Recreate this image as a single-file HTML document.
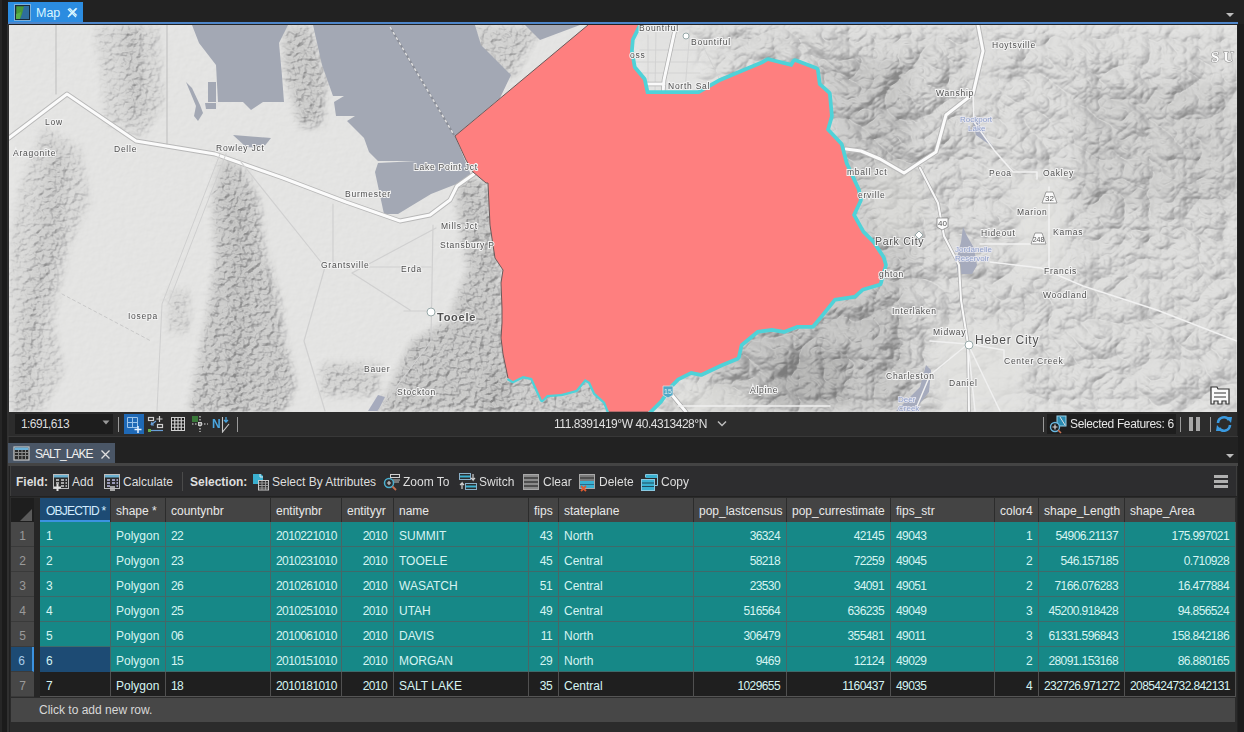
<!DOCTYPE html>
<html><head><meta charset="utf-8">
<style>
*{margin:0;padding:0;box-sizing:border-box}
html,body{width:1244px;height:732px;overflow:hidden;background:#222222;font-family:"Liberation Sans",sans-serif;font-size:12px;color:#e6e6e6}
.a{position:absolute}
#lstrip{left:0;top:0;width:8px;height:732px;background:#1b1b1b}
#maptab{left:8px;top:2px;width:75px;height:21px;background:#2b8ce0}
#mapline{left:8px;top:22px;width:1230px;height:2px;background:#4f86c9}
#map{left:9px;top:25px;width:1228px;height:387px;overflow:hidden;background:#e3e3e1}
#status{left:9px;top:412px;width:1228px;height:24px;background:#2c2c2c}
#tabbar2{left:8px;top:436px;width:1230px;height:1px;background:#383838}
#tab2{left:8px;top:443px;width:107px;height:21px;background:#4a5666}
#tabline2{left:8px;top:463px;width:1230px;height:3px;background:#444}
#tool{left:10px;top:466px;width:1227px;height:30px;background:#2d2d2f;border-left:1px solid #3d3d3d;border-right:1px solid #3d3d3d}
#tbl{left:10px;top:497px;width:1227px;height:235px;background:#2b2b2b}
.hc{position:absolute;top:498px;height:24px;background:#444;padding-left:6px;line-height:26px;color:#e8e8e8;white-space:nowrap;overflow:hidden}
.hc.sel{background:#1d4b74;border-bottom:2px solid #3b92e0;color:#d2ecff}
.row{position:absolute;left:40px;width:1195px;height:25px}
.row.t{background:#168887;border-bottom:1px solid #3f6a6a}
.row.k{background:#1f1f1f;border-bottom:1px solid #555}
.rh{position:absolute;left:11px;width:23px;height:25px;background:#474747;color:#9a9a9a;text-align:center;line-height:28px;border-bottom:1px solid #3a3a3a}
.rh.s6{background:#1d4b74;color:#a9cbe8;border-right:2px solid #3b92e0}
.c{position:absolute;height:25px;line-height:28px;padding:0 6px;white-space:nowrap;overflow:hidden;color:#d6f4f2}
.c.r{text-align:right}
.c.n{letter-spacing:-0.6px}
.c6{background:#1d4b74}
.row.k+.rh+.c{}
.vl{position:absolute;top:522px;width:1px;height:150px;background:#4a6666}
.vk{position:absolute;top:672px;width:1px;height:25px;background:#505050}
.vh{position:absolute;top:498px;width:1px;height:24px;background:#2c2c2c}
#corner{left:11px;top:498px;width:23px;height:24px;background:#1e1e1e}
#hsep{left:34px;top:498px;width:6px;height:199px;background:#262626}
#addrow{left:11px;top:698px;width:1224px;height:24px;background:#474747;color:#d8d8d8;line-height:25px;padding-left:28px}
</style></head><body>
<div class="a" id="lstrip"></div>
<div class="a" style="left:1238px;top:24px;width:6px;height:708px;background:#1c1c1c"></div>
<div class="a" style="left:0;top:0;width:2px;height:732px;background:#262626"></div>
<div class="a" style="left:7px;top:24px;width:2px;height:708px;background:#303030"></div>
<div class="a" id="maptab"></div>
<div class="a" style="left:15px;top:5px;width:14px;height:15px;background:#3f8a4a;border:1px solid #1a3a5a"></div>
<div class="a" style="left:36px;top:6px;font-size:12.5px;color:#d9f6ff">Map</div>
<div class="a" style="left:67px;top:4px;font-size:14px;color:#d9f6ff">&#x2715;</div>
<div class="a" id="mapline"></div>
<div class="a" id="map"><svg width="1228" height="387" viewBox="9 25 1228 387" style="display:block">
<defs>
<filter id="hsw" filterUnits="userSpaceOnUse" x="9" y="24" width="611" height="388" color-interpolation-filters="sRGB">
  <feGaussianBlur in="SourceAlpha" stdDeviation="4.5" result="m"/>
  <feTurbulence type="fractalNoise" baseFrequency="0.17 0.2" numOctaves="3" seed="11" result="n"/>
  <feComposite in="n" in2="m" operator="arithmetic" k1="1" k2="0" k3="0" k4="0" result="h"/>
  <feDiffuseLighting in="h" surfaceScale="9" diffuseConstant="1" lighting-color="#ffffff" result="l">
    <feDistantLight azimuth="225" elevation="62"/>
  </feDiffuseLighting>
  <feComponentTransfer in="l" result="t">
    <feFuncR type="table" tableValues="0.62 0.74 0.82 0.885 0.92"/>
    <feFuncG type="table" tableValues="0.62 0.74 0.82 0.885 0.92"/>
    <feFuncB type="table" tableValues="0.62 0.74 0.82 0.88 0.915"/>
  </feComponentTransfer>
  <feColorMatrix in="m" type="matrix" values="0 0 0 -0.17 1  0 0 0 -0.17 1  0 0 0 -0.17 1  0 0 0 0 1" result="mc"/>
  <feComposite in="t" in2="mc" operator="arithmetic" k1="1" k2="0" k3="0" k4="0"/>
</filter>
<filter id="hse" filterUnits="userSpaceOnUse" x="620" y="24" width="617" height="388" color-interpolation-filters="sRGB">
  <feGaussianBlur in="SourceAlpha" stdDeviation="10" result="m"/>
  <feTurbulence type="turbulence" baseFrequency="0.02 0.025" numOctaves="4" seed="5" result="n"/>
  <feComposite in="n" in2="m" operator="arithmetic" k1="1" k2="0" k3="0" k4="0" result="h"/>
  <feDiffuseLighting in="h" surfaceScale="20" diffuseConstant="1" lighting-color="#ffffff" result="l">
    <feDistantLight azimuth="225" elevation="62"/>
  </feDiffuseLighting>
  <feComponentTransfer in="l" result="t">
    <feFuncR type="table" tableValues="0.62 0.74 0.82 0.885 0.93"/>
    <feFuncG type="table" tableValues="0.62 0.74 0.82 0.885 0.93"/>
    <feFuncB type="table" tableValues="0.62 0.74 0.82 0.88 0.925"/>
  </feComponentTransfer>
  <feColorMatrix in="m" type="matrix" values="0 0 0 -0.1 1  0 0 0 -0.1 1  0 0 0 -0.1 1  0 0 0 0 1" result="mc"/>
  <feComposite in="t" in2="mc" operator="arithmetic" k1="1" k2="0" k3="0" k4="0"/>
</filter>
<filter id="bl4"><feGaussianBlur stdDeviation="6"/></filter>
</defs>
<g filter="url(#hsw)">
  <rect x="9" y="24" width="611" height="388" fill="#000" fill-opacity="0.05"/>
  <!-- Lakeside -->
  <path d="M93 25 L157 25 L162 104 L141 136 L104 120 L101 78 Z" fill="#000" fill-opacity="0.35"/>
  <path d="M118 25 L140 25 L145 110 L128 120 Z" fill="#000" fill-opacity="0.4"/>
  <!-- Cedar -->
  <path d="M41 125 L78 146 L88 199 L67 246 L51 320 L62 368 L41 411 L9 411 L9 236 L20 183 Z" fill="#000" fill-opacity="0.35"/>
  <path d="M50 140 L68 160 L62 240 L40 320 L30 411 L15 411 L25 300 L40 200 Z" fill="#000" fill-opacity="0.35"/>
  <!-- Stansbury -->
  <path d="M220 157 L241 167 L257 199 L262 246 L278 299 L283 341 L294 383 L283 411 L188 411 L199 352 L209 299 L215 257 L212 199 Z" fill="#000" fill-opacity="0.65"/>
  <path d="M228 190 L244 195 L250 300 L240 411 L226 411 L232 300 Z" fill="#000" fill-opacity="0.45"/>
  <path d="M167 289 L188 289 L188 331 L167 331 Z" fill="#000" fill-opacity="0.35"/>
  <!-- island -->
  <path d="M283 25 L309 25 L325 78 L320 125 L299 125 L283 67 Z" fill="#000" fill-opacity="0.65"/>
  <path d="M473 25 L540 25 L510 78 L480 60 Z" fill="#000" fill-opacity="0.5"/>
  <!-- Oquirrh -->
  <path d="M457 178 L483 178 L494 225 L505 341 L510 411 L378 411 L410 341 L447 320 L468 267 L457 215 Z" fill="#000" fill-opacity="0.7"/>
  <path d="M320 362 L378 362 L378 394 L320 394 Z" fill="#000" fill-opacity="0.45"/>
  <path d="M483 368 L620 368 L620 411 L483 411 Z" fill="#000" fill-opacity="0.6"/>
</g>
<g filter="url(#hse)">
  <rect x="620" y="24" width="617" height="388" fill="#000" fill-opacity="0.05"/>
  <path d="M600 25 L1237 25 L1237 411 L600 411 L760 330 L880 280 L860 150 L820 60 Z" fill="#000" fill-opacity="0.55"/>
  <path d="M815 60 L915 60 L920 280 L860 300 Z" fill="#000" fill-opacity="0.6"/>
  <path d="M735 285 L920 270 L920 411 L690 411 Z" fill="#000" fill-opacity="0.7"/>
  <path d="M765 340 L850 340 L850 411 L765 411 Z" fill="#000" fill-opacity="0.6"/>
  <path d="M740 300 L900 290 L910 360 L740 350 Z" fill="#000" fill-opacity="0.4"/>
  <path d="M830 25 L975 25 L975 150 L830 150 Z" fill="#000" fill-opacity="0.3"/>
  <path d="M700 25 L830 25 L830 75 L700 90 Z" fill="#000" fill-opacity="0.5"/>
  <path d="M1075 80 L1237 80 L1237 240 L1075 240 Z" fill="#000" fill-opacity="0.3"/>
</g>
<!-- extra shade -->
<g fill="#000" filter="url(#bl4)">
  <path d="M740 300 L900 290 L910 411 L700 411 Z" opacity="0.06"/>
  <path d="M770 350 L845 350 L845 405 L770 405 Z" opacity="0.08"/>
  <path d="M815 60 L910 60 L915 280 L870 290 Z" opacity="0.05"/>
  <path d="M1080 90 L1237 80 L1237 200 L1080 210 Z" opacity="0.04"/>
</g>
<!-- valleys / flats (lighten) -->
<g fill="#e2e2e0" filter="url(#bl4)">
  <path d="M636 25 L690 25 L700 94 L646 94 Z" opacity="0.85"/>
  <path d="M930 320 L1030 330 L1025 411 L935 411 Z" opacity="0.8"/>
  <path d="M1012 175 L1068 175 L1068 275 L1015 275 Z" opacity="0.8"/>
  <ellipse cx="895" cy="200" rx="28" ry="38" opacity="0.6"/>
  <ellipse cx="983" cy="65" rx="15" ry="40" opacity="0.5"/>
  <ellipse cx="712" cy="400" rx="45" ry="16" opacity="0.6"/>
</g>
<!-- lakes -->
<g fill="#a3a8b4">
  <path d="M192 25 L199 43 L216 65 L218 102 L243 102 L251 110 L263 102 L284 102 L282 76 L279 43 L288 25 Z"/>
  <path d="M186 82 L192 88 L200 105 L203 113 L198 121 L194 116 L196 106 Z"/>
  <path d="M208 82 L216 82 L216 102 L208 102 Z"/>
  <path d="M205 103 L216 103 L216 109 L206 109 Z"/>
  <path d="M233 135 L271 138 L263 148 L246 147 Z"/>
  <path d="M313 25 L322 65 L333 96 L344 96 L334 102 L336 116 L355 116 L347 121 L364 138 L369 152 L378 161 L417 161 L378 163 L375 172 L384 214 L398 214 L431 194 L459 183 L471 175 L455 136 L500 98 L511 75 L501 65 L481 45 L475 25 Z"/>
  <path d="M525 25 L580 25 L540 40 Z"/>
</g>
<g fill="#a6abbd">
  <path d="M972 120 L976 135 L994 148 L985 136 L978 122 Z"/>
  <path d="M963 227 L967 236 L974 248 L977 265 L972 274 L958 274 L956 261 L961 242 Z"/>
  <path d="M926 365 L931 370 L929 392 L920 403 L915 411 L896 411 L907 400 L920 387 Z"/>
  <path d="M368 411 L378 395 L385 397 L378 411 Z"/>
</g>
<!-- railroad causeway -->
<line x1="390" y1="27" x2="454" y2="135" stroke="#8a8e98" stroke-width="2"/><line x1="390" y1="27" x2="454" y2="135" stroke="#e0e0e0" stroke-width="1.5" stroke-dasharray="3 3"/>
<!-- roads -->
<g fill="none" stroke-linejoin="round" stroke-linecap="round">
  <path d="M9 138 L67 94 L136 141 L215 154 L283 178 L346 202 L400 221 L430 215 L450 200 L457 186 L474 174 L480 168" stroke="#b8b8b8" stroke-width="5"/>
  <path d="M9 138 L67 94 L136 141 L215 154 L283 178 L346 202 L400 221 L430 215 L450 200 L457 186 L474 174 L480 168" stroke="#fbfbfb" stroke-width="3"/>
  <path d="M846 149 L861 151 L880 159 L904 173 L919 163 L936 152 L946 115 L973 94 L983 51 L978 25" stroke="#b8b8b8" stroke-width="5"/>
  <path d="M846 149 L861 151 L880 159 L904 173 L919 163 L936 152 L946 115 L973 94 L983 51 L978 25" stroke="#fbfbfb" stroke-width="3"/>
  <path d="M920 168 L938 203 L944 236 L959 265 L961 300 L968 344 L969 411" stroke="#b0b0b0" stroke-width="3.5"/><path d="M920 168 L938 203 L944 236 L959 265 L961 300 L968 344 L969 411" stroke="#f8f8f8" stroke-width="2"/>
  <path d="M640 50 L700 50 M636 62 L705 62 M640 73 L700 73 M648 35 L648 94 M656 30 L655 94 M690 30 L685 90 M700 40 L720 80" stroke="#cfcfcf" stroke-width="0.8"/>
  <path d="M676 25 L664 80 L663 94 M646 84 L664 84" stroke="#b0b0b0" stroke-width="4.5"/><path d="M676 25 L664 80 L663 94 M646 84 L664 84" stroke="#fafafa" stroke-width="3"/>
  <path d="M973 94 L974 122 L994 150 L1013 172 L1037 172 L1037 179 M1049 187 L1049 268 M980 244 L1033 244 M990 262 L1041 268 L1083 286 L1157 310 L1237 341" stroke="#f2f2f2" stroke-width="1.5"/>
  <path d="M968 344 L930 375 L915 411 M968 344 L1000 411 M930 341 L968 344 L1004 350 L1004 360 M968 344 L975 411" stroke="#f0f0f0" stroke-width="1.5"/>
  <path d="M220 154 L162 304 L157 411 M226 154 L168 304" stroke="#cfcfcf" stroke-width="1"/>
  <path d="M167 25 L167 144 M56 25 L56 94" stroke="#bdbdbd" stroke-width="1"/>
  <path d="M62 294 L151 341" stroke="#c8c8c8" stroke-width="1" stroke-dasharray="3 3"/>
  <path d="M241 162 L325 267 L431 267 M333 204 L333 267 M352 273 L410 310 M325 267 L304 341 L325 411 M436 228 L352 273 M433 225 L431 341 M404 311 L431 311 M431 341 L378 411" stroke="#d0d0d0" stroke-width="1.2"/>
  <path d="M672 395 L686 412" stroke="#a8a8a8" stroke-width="4.5"/><path d="M672 395 L686 412" stroke="#fafafa" stroke-width="3"/><path d="M678 406 L830 406" stroke="#f0f0f0" stroke-width="1.5"/>
</g>
<!-- polygon -->
<path d="M638 25 L631 39 L630 51 L633 68 L643 80 L646 94 L699 94 L720 82 L763 64 L768 61 L792 67 L795 62 L816 70 L818 85 L828 94 L830 116 L826 130 L840 145 L845 164 L857 190 L859 200 L852 215 L862 233 L872 243 L882 258 L884 265 L879 283 L862 288 L854 295 L834 298 L822 313 L812 325 L797 325 L784 330 L772 328 L757 330 L740 344 L737 357 L720 364 L701 373 L691 371 L677 378 L670 385 L660 400 L648 412" fill="none" stroke="#4fd2d8" stroke-width="7.5" stroke-linejoin="round"/>
<path d="M609 412 L605 402 L595 393 L590 382 L585 379 L576 390 L561 394 L547 395 L542 400 L532 378 L523 376 L513 381 L508 378" fill="none" stroke="#4fd2d8" stroke-width="4.5" stroke-linejoin="round"/>
<path d="M588 25 L638 25 L631 39 L630 51 L633 68 L643 80 L646 94 L699 94 L720 82 L763 64 L768 61 L792 67 L795 62 L816 70 L818 85 L828 94 L830 116 L826 130 L840 145 L845 164 L857 190 L859 200 L852 215 L862 233 L872 243 L882 258 L884 265 L879 283 L862 288 L854 295 L834 298 L822 313 L812 325 L797 325 L784 330 L772 328 L757 330 L740 344 L737 357 L720 364 L701 373 L691 371 L677 378 L670 385 L660 400 L648 412 L609 412 L605 402 L595 393 L590 382 L585 379 L576 390 L561 394 L547 395 L542 400 L532 378 L523 376 L513 381 L508 378 L503 354 L501 338 L502 323 L502 308 L501 283 L503 270 L495 258 L493 245 L490 225 L488 183 L486 183 L473 172 L466 160 L455 136 Z" fill="#fe7f7f"/>
<path d="M648 412 L609 412 M508 378 L503 354 L501 338 L502 323 L502 308 L501 283 L503 270 L495 258 L493 245 L490 225 L488 183 L486 183 L473 172 L466 160 L455 136 L588 25" fill="none" stroke="#6a5a5a" stroke-width="1"/>
<!-- shields -->
<g font-family="Liberation Sans" font-size="8" fill="#555" text-anchor="middle">
  <path d="M937 218 L948 218 L948 227 L942 230 L937 227 Z" fill="#fafafa" stroke="#888" stroke-width="0.8"/>
  <text x="942.5" y="226">40</text>
  <path d="M1042 203 L1046 192 L1053 192 L1057 203 Z" fill="#fafafa" stroke="#888" stroke-width="0.8"/>
  <text x="1049.5" y="201">32</text>
  <path d="M1031 244 L1035 233 L1042 233 L1046 244 Z" fill="#fafafa" stroke="#888" stroke-width="0.8"/>
  <text x="1038.5" y="242" font-size="7">248</text>
  <path d="M663 386 L673 386 L673 395 L668 398 L663 395 Z" fill="#4fa9c8" stroke="#ddd" stroke-width="0.8"/>
  <text x="668" y="394" fill="#eee" font-size="7">15</text>
</g>
<!-- labels -->
<g font-family="Liberation Sans" font-size="8.5" fill="#505050" letter-spacing="0.75" stroke="#f2f2f2" stroke-width="2" paint-order="stroke">
  <text x="45" y="125">Low</text>
  <text x="13" y="156">Aragonite</text>
  <text x="114" y="152">Delle</text>
  <text x="216" y="151">Rowley Jct</text>
  <text x="345" y="197">Burmester</text>
  <text x="414" y="170">Lake Point Jct</text>
  <text x="441" y="229">Mills Jct</text>
  <text x="440" y="248">Stansbury P</text>
  <text x="321" y="268">Grantsville</text>
  <text x="401" y="272">Erda</text>
  <text x="128" y="319">Iosepa</text>
  <text x="364" y="372">Bauer</text>
  <text x="397" y="395">Stockton</text>
  <text x="639" y="31">Bountiful</text>
  <text x="691" y="45">Bountiful</text>
  <text x="630" y="58">oss</text>
  <text x="668" y="89">North Sal</text>
  <text x="992" y="48">Hoytsville</text>
  <text x="936" y="96">Wanship</text>
  <text x="989" y="176">Peoa</text>
  <text x="1043" y="176">Oakley</text>
  <text x="1017" y="215">Marion</text>
  <text x="1053" y="235">Kamas</text>
  <text x="981" y="236">Hideout</text>
  <text x="1044" y="274">Francis</text>
  <text x="1043" y="298">Woodland</text>
  <text x="847" y="175">mball Jct</text>
  <text x="858" y="198">erville</text>
  <text x="879" y="277">ghton</text>
  <text x="892" y="314">Interlaken</text>
  <text x="933" y="335">Midway</text>
  <text x="1004" y="364">Center Creek</text>
  <text x="886" y="379">Charleston</text>
  <text x="949" y="386">Daniel</text>
  <text x="750" y="393">Alpine</text>
  <text x="875" y="245" font-size="10.5">Park City</text>
  <text x="975" y="344" font-size="12">Heber City</text>
  <text x="437" y="321" font-size="11" font-weight="bold">Tooele</text>
</g>
<g font-family="Liberation Sans" font-size="8" fill="#8f9fc8" stroke="#e8e8f0" stroke-width="1.5" paint-order="stroke">
  <text x="960" y="122">Rockport</text><text x="968" y="131">Lake</text>
  <text x="955" y="252">Jordanelle</text><text x="955" y="261">Reservoir</text>
  <text x="898" y="402">Deer</text><text x="898" y="411">Creek</text>
</g>
<g fill="#fff" stroke="#9aa" stroke-width="1">
  <circle cx="431" cy="312" r="4"/><circle cx="969" cy="345" r="4"/><circle cx="686" cy="36" r="3"/><path d="M919 231 L923 235 L919 239 L915 235 Z"/>
</g>
<text x="1211" y="62" font-family="Liberation Serif" font-size="15" font-weight="bold" fill="#fbfbfb" stroke="#8a8a8a" stroke-width="0.9" paint-order="stroke" letter-spacing="4">SU</text>
<!-- overview button -->
<path d="M1211 387 L1217 387 L1218 389 L1229 389 L1229 404 L1226 404 L1226 401 L1222 401 L1222 404 L1218 404 L1218 401 L1214 401 L1214 404 L1211 404 Z" fill="#fafafa" stroke="#333" stroke-width="1.2"/>
<path d="M1214 393 L1226 393 M1214 397 L1226 397" stroke="#333" stroke-width="1.2"/>
</svg>
</div>
<div class="a" id="status"></div>
<div class="a" style="left:15px;top:414px;width:98px;height:20px;background:#1d1d1d"></div>
<div class="a" style="left:21px;top:417px;color:#dcdcdc;font-size:12px;letter-spacing:-0.6px">1:691,613</div>
<div class="a" id="tabbar2"></div>
<div class="a" id="tab2"></div>
<div class="a" style="left:35px;top:447px;color:#f0f0f0;letter-spacing:-1px">SALT_LAKE</div>
<div class="a" id="tabline2"></div>
<div class="a" id="tool"></div>
<div class="a" style="left:16px;top:475px;font-weight:bold;color:#dedede">Field:</div>
<div class="a" style="left:72px;top:475px;color:#dedede">Add</div>
<div class="a" style="left:123px;top:475px;color:#dedede">Calculate</div>
<div class="a" style="left:190px;top:475px;font-weight:bold;color:#dedede">Selection:</div>
<div class="a" style="left:272px;top:475px;color:#dedede">Select By Attributes</div>
<div class="a" id="tbl"></div>
<div class="a" id="corner"></div>
<div class="a" id="hsep"></div>
<div class="hc sel" style="left:40px;width:70px;letter-spacing:-0.8px">OBJECTID *</div>
<div class="hc" style="left:110px;width:55px">shape *</div>
<div class="hc" style="left:165px;width:105px">countynbr</div>
<div class="hc" style="left:270px;width:71px">entitynbr</div>
<div class="hc" style="left:341px;width:52px">entityyr</div>
<div class="hc" style="left:393px;width:135px">name</div>
<div class="hc" style="left:528px;width:30px">fips</div>
<div class="hc" style="left:558px;width:135px">stateplane</div>
<div class="hc" style="left:693px;width:93px">pop_lastcensus</div>
<div class="hc" style="left:786px;width:104px">pop_currestimate</div>
<div class="hc" style="left:890px;width:104px">fips_str</div>
<div class="hc" style="left:994px;width:44px">color4</div>
<div class="hc" style="left:1038px;width:86px">shape_Length</div>
<div class="hc" style="left:1124px;width:111px">shape_Area</div>
<div class="row t" style="top:522px"></div>
<div class="rh" style="top:522px">1</div>
<div class="c n" style="top:522px;left:40px;width:70px">1</div>
<div class="c" style="top:522px;left:110px;width:55px">Polygon</div>
<div class="c n" style="top:522px;left:165px;width:105px">22</div>
<div class="c n" style="top:522px;left:270px;width:71px">2010221010</div>
<div class="c r n" style="top:522px;left:341px;width:52px">2010</div>
<div class="c" style="top:522px;left:393px;width:135px">SUMMIT</div>
<div class="c r n" style="top:522px;left:528px;width:30px">43</div>
<div class="c" style="top:522px;left:558px;width:135px">North</div>
<div class="c r n" style="top:522px;left:693px;width:93px">36324</div>
<div class="c r n" style="top:522px;left:786px;width:104px">42145</div>
<div class="c n" style="top:522px;left:890px;width:104px">49043</div>
<div class="c r n" style="top:522px;left:994px;width:44px">1</div>
<div class="c r n" style="top:522px;left:1038px;width:86px">54906.21137</div>
<div class="c r n" style="top:522px;left:1124px;width:111px">175.997021</div>
<div class="row t" style="top:547px"></div>
<div class="rh" style="top:547px">2</div>
<div class="c n" style="top:547px;left:40px;width:70px">2</div>
<div class="c" style="top:547px;left:110px;width:55px">Polygon</div>
<div class="c n" style="top:547px;left:165px;width:105px">23</div>
<div class="c n" style="top:547px;left:270px;width:71px">2010231010</div>
<div class="c r n" style="top:547px;left:341px;width:52px">2010</div>
<div class="c" style="top:547px;left:393px;width:135px">TOOELE</div>
<div class="c r n" style="top:547px;left:528px;width:30px">45</div>
<div class="c" style="top:547px;left:558px;width:135px">Central</div>
<div class="c r n" style="top:547px;left:693px;width:93px">58218</div>
<div class="c r n" style="top:547px;left:786px;width:104px">72259</div>
<div class="c n" style="top:547px;left:890px;width:104px">49045</div>
<div class="c r n" style="top:547px;left:994px;width:44px">2</div>
<div class="c r n" style="top:547px;left:1038px;width:86px">546.157185</div>
<div class="c r n" style="top:547px;left:1124px;width:111px">0.710928</div>
<div class="row t" style="top:572px"></div>
<div class="rh" style="top:572px">3</div>
<div class="c n" style="top:572px;left:40px;width:70px">3</div>
<div class="c" style="top:572px;left:110px;width:55px">Polygon</div>
<div class="c n" style="top:572px;left:165px;width:105px">26</div>
<div class="c n" style="top:572px;left:270px;width:71px">2010261010</div>
<div class="c r n" style="top:572px;left:341px;width:52px">2010</div>
<div class="c" style="top:572px;left:393px;width:135px">WASATCH</div>
<div class="c r n" style="top:572px;left:528px;width:30px">51</div>
<div class="c" style="top:572px;left:558px;width:135px">Central</div>
<div class="c r n" style="top:572px;left:693px;width:93px">23530</div>
<div class="c r n" style="top:572px;left:786px;width:104px">34091</div>
<div class="c n" style="top:572px;left:890px;width:104px">49051</div>
<div class="c r n" style="top:572px;left:994px;width:44px">2</div>
<div class="c r n" style="top:572px;left:1038px;width:86px">7166.076283</div>
<div class="c r n" style="top:572px;left:1124px;width:111px">16.477884</div>
<div class="row t" style="top:597px"></div>
<div class="rh" style="top:597px">4</div>
<div class="c n" style="top:597px;left:40px;width:70px">4</div>
<div class="c" style="top:597px;left:110px;width:55px">Polygon</div>
<div class="c n" style="top:597px;left:165px;width:105px">25</div>
<div class="c n" style="top:597px;left:270px;width:71px">2010251010</div>
<div class="c r n" style="top:597px;left:341px;width:52px">2010</div>
<div class="c" style="top:597px;left:393px;width:135px">UTAH</div>
<div class="c r n" style="top:597px;left:528px;width:30px">49</div>
<div class="c" style="top:597px;left:558px;width:135px">Central</div>
<div class="c r n" style="top:597px;left:693px;width:93px">516564</div>
<div class="c r n" style="top:597px;left:786px;width:104px">636235</div>
<div class="c n" style="top:597px;left:890px;width:104px">49049</div>
<div class="c r n" style="top:597px;left:994px;width:44px">3</div>
<div class="c r n" style="top:597px;left:1038px;width:86px">45200.918428</div>
<div class="c r n" style="top:597px;left:1124px;width:111px">94.856524</div>
<div class="row t" style="top:622px"></div>
<div class="rh" style="top:622px">5</div>
<div class="c n" style="top:622px;left:40px;width:70px">5</div>
<div class="c" style="top:622px;left:110px;width:55px">Polygon</div>
<div class="c n" style="top:622px;left:165px;width:105px">06</div>
<div class="c n" style="top:622px;left:270px;width:71px">2010061010</div>
<div class="c r n" style="top:622px;left:341px;width:52px">2010</div>
<div class="c" style="top:622px;left:393px;width:135px">DAVIS</div>
<div class="c r n" style="top:622px;left:528px;width:30px">11</div>
<div class="c" style="top:622px;left:558px;width:135px">North</div>
<div class="c r n" style="top:622px;left:693px;width:93px">306479</div>
<div class="c r n" style="top:622px;left:786px;width:104px">355481</div>
<div class="c n" style="top:622px;left:890px;width:104px">49011</div>
<div class="c r n" style="top:622px;left:994px;width:44px">3</div>
<div class="c r n" style="top:622px;left:1038px;width:86px">61331.596843</div>
<div class="c r n" style="top:622px;left:1124px;width:111px">158.842186</div>
<div class="row t" style="top:647px"></div>
<div class="rh s6" style="top:647px">6</div>
<div class="c n c6" style="top:647px;left:40px;width:70px">6</div>
<div class="c" style="top:647px;left:110px;width:55px">Polygon</div>
<div class="c n" style="top:647px;left:165px;width:105px">15</div>
<div class="c n" style="top:647px;left:270px;width:71px">2010151010</div>
<div class="c r n" style="top:647px;left:341px;width:52px">2010</div>
<div class="c" style="top:647px;left:393px;width:135px">MORGAN</div>
<div class="c r n" style="top:647px;left:528px;width:30px">29</div>
<div class="c" style="top:647px;left:558px;width:135px">North</div>
<div class="c r n" style="top:647px;left:693px;width:93px">9469</div>
<div class="c r n" style="top:647px;left:786px;width:104px">12124</div>
<div class="c n" style="top:647px;left:890px;width:104px">49029</div>
<div class="c r n" style="top:647px;left:994px;width:44px">2</div>
<div class="c r n" style="top:647px;left:1038px;width:86px">28091.153168</div>
<div class="c r n" style="top:647px;left:1124px;width:111px">86.880165</div>
<div class="row k" style="top:672px"></div>
<div class="rh" style="top:672px">7</div>
<div class="c n" style="top:672px;left:40px;width:70px">7</div>
<div class="c" style="top:672px;left:110px;width:55px">Polygon</div>
<div class="c n" style="top:672px;left:165px;width:105px">18</div>
<div class="c n" style="top:672px;left:270px;width:71px">2010181010</div>
<div class="c r n" style="top:672px;left:341px;width:52px">2010</div>
<div class="c" style="top:672px;left:393px;width:135px">SALT LAKE</div>
<div class="c r n" style="top:672px;left:528px;width:30px">35</div>
<div class="c" style="top:672px;left:558px;width:135px">Central</div>
<div class="c r n" style="top:672px;left:693px;width:93px">1029655</div>
<div class="c r n" style="top:672px;left:786px;width:104px">1160437</div>
<div class="c n" style="top:672px;left:890px;width:104px">49035</div>
<div class="c r n" style="top:672px;left:994px;width:44px">4</div>
<div class="c r n" style="top:672px;left:1038px;width:86px">232726.971272</div>
<div class="c r n" style="top:672px;left:1124px;width:111px">2085424732.842131</div>
<div class="vl" style="left:110px"></div>
<div class="vh" style="left:110px"></div>
<div class="vk" style="left:110px"></div>
<div class="vl" style="left:165px"></div>
<div class="vh" style="left:165px"></div>
<div class="vk" style="left:165px"></div>
<div class="vl" style="left:270px"></div>
<div class="vh" style="left:270px"></div>
<div class="vk" style="left:270px"></div>
<div class="vl" style="left:341px"></div>
<div class="vh" style="left:341px"></div>
<div class="vk" style="left:341px"></div>
<div class="vl" style="left:393px"></div>
<div class="vh" style="left:393px"></div>
<div class="vk" style="left:393px"></div>
<div class="vl" style="left:528px"></div>
<div class="vh" style="left:528px"></div>
<div class="vk" style="left:528px"></div>
<div class="vl" style="left:558px"></div>
<div class="vh" style="left:558px"></div>
<div class="vk" style="left:558px"></div>
<div class="vl" style="left:693px"></div>
<div class="vh" style="left:693px"></div>
<div class="vk" style="left:693px"></div>
<div class="vl" style="left:786px"></div>
<div class="vh" style="left:786px"></div>
<div class="vk" style="left:786px"></div>
<div class="vl" style="left:890px"></div>
<div class="vh" style="left:890px"></div>
<div class="vk" style="left:890px"></div>
<div class="vl" style="left:994px"></div>
<div class="vh" style="left:994px"></div>
<div class="vk" style="left:994px"></div>
<div class="vl" style="left:1038px"></div>
<div class="vh" style="left:1038px"></div>
<div class="vk" style="left:1038px"></div>
<div class="vl" style="left:1124px"></div>
<div class="vh" style="left:1124px"></div>
<div class="vk" style="left:1124px"></div>
<div class="vl" style="left:1235px"></div>
<div class="vh" style="left:1235px"></div>
<div class="vk" style="left:1235px"></div>
<div class="a" id="addrow">Click to add new row.</div>
<!-- top tab icons -->
<svg class="a" style="left:14px;top:4px" width="17" height="17" viewBox="0 0 17 17">
  <rect x="1.5" y="1.5" width="14" height="14" fill="#4a9a3a" stroke="#1a2a3a" stroke-width="1.5"/>
  <path d="M10 2 L15 2 L15 15 L6 15 L8 10 Z" fill="#2e6e9e"/>
  <path d="M2 10 L7 8 L6 15 L2 15 Z" fill="#5ab04a"/>
  <rect x="0.5" y="0.5" width="16" height="16" fill="none" stroke="#7fb0d8" stroke-width="1"/>
</svg>
<svg class="a" style="left:67px;top:8px" width="10" height="10" viewBox="0 0 10 10"><path d="M1 1 L9 9 M9 1 L1 9" stroke="#d9f6ff" stroke-width="1.4"/></svg>
<svg class="a" style="left:1225px;top:12px" width="10" height="6" viewBox="0 0 10 6"><path d="M1 1 L9 1 L5 5 Z" fill="#bdbdbd"/></svg>
<!-- status bar -->
<svg class="a" style="left:102px;top:420px" width="8" height="5" viewBox="0 0 8 5"><path d="M0.5 0.5 L7.5 0.5 L4 4.5 Z" fill="#9a9a9a"/></svg>
<div class="a" style="left:118px;top:417px;width:1px;height:15px;background:#9a9a9a"></div>
<div class="a" style="left:124px;top:414px;width:20px;height:20px;background:#1f69b6"></div>
<svg class="a" style="left:124px;top:414px" width="20" height="20" viewBox="0 0 20 20">
  <path d="M3.5 3.5 H13.5 V13.5 H3.5 Z M8.5 3.5 V13.5 M3.5 8.5 H13.5" fill="none" stroke="#9cc4ea" stroke-width="1"/>
  <path d="M14 12 V19 M10.5 15.5 H17.5" stroke="#e8f2ff" stroke-width="1.5"/>
</svg>
<svg class="a" style="left:147px;top:415px" width="18" height="18" viewBox="0 0 18 18">
  <rect x="1.5" y="2.5" width="5" height="3" fill="none" stroke="#d0d0d0" stroke-width="1.2"/>
  <path d="M12.5 1 V7 M9.5 4 H15.5" stroke="#d0d0d0" stroke-width="1.2"/>
  <path d="M4 10 L9 6 M4 10 L5 7 M4 10 L7 10" stroke="#6aa0d8" stroke-width="1.2" fill="none"/>
  <rect x="10.5" y="9.5" width="5" height="3" fill="none" stroke="#d0d0d0" stroke-width="1.2"/>
  <rect x="1" y="14" width="3" height="3" fill="#6ab04a"/>
  <path d="M4 15.5 H16" stroke="#6aa0d8" stroke-width="1.2"/>
</svg>
<svg class="a" style="left:171px;top:417px" width="14" height="14" viewBox="0 0 14 14">
  <rect x="0.5" y="0.5" width="13" height="13" fill="#1a1a1a" stroke="#d0d0d0" stroke-width="1"/>
  <path d="M3.75 0 V14 M7 0 V14 M10.25 0 V14 M0 3.75 H14 M0 7 H14 M0 10.25 H14" stroke="#d0d0d0" stroke-width="1.2"/>
</svg>
<svg class="a" style="left:191px;top:415px" width="18" height="18" viewBox="0 0 18 18">
  <rect x="1" y="1" width="6" height="6" fill="#3a7a3a"/>
  <path d="M9 1 V17 M1 9 H17" stroke="#d8d8d8" stroke-width="1.2" stroke-dasharray="1.5 1.5"/>
  <rect x="7.5" y="7.5" width="3" height="3" fill="#888" stroke="#ddd" stroke-width="0.8"/>
</svg>
<svg class="a" style="left:212px;top:415px" width="19" height="18" viewBox="0 0 19 18">
  <text x="0" y="13" font-family="Liberation Sans" font-weight="bold" font-size="12" fill="#4aa6e0">N</text>
  <path d="M10.5 2 V17 L17 9" stroke="#c8c8c8" stroke-width="1.1" fill="none"/>
  <path d="M14 2 V7 M12 5 L14 7 L16 5" stroke="#4aa6e0" stroke-width="1.3" fill="none"/>
</svg>
<div class="a" style="left:237px;top:417px;width:1px;height:15px;background:#9a9a9a"></div>
<div class="a" style="left:554px;top:417px;color:#e0e0e0;letter-spacing:-0.45px">111.8391419°W 40.4313428°N</div>
<svg class="a" style="left:717px;top:420px" width="10" height="7" viewBox="0 0 10 7"><path d="M1 1.5 L5 5.5 L9 1.5" stroke="#bdbdbd" stroke-width="1.5" fill="none"/></svg>
<div class="a" style="left:1043px;top:417px;width:1px;height:15px;background:#9a9a9a"></div>
<div class="a" style="left:1047px;top:414px;width:129px;height:20px;background:#1e1e1e"></div>
<svg class="a" style="left:1048px;top:414px" width="20" height="20" viewBox="0 0 20 20">
  <rect x="9" y="2" width="9" height="10" fill="#2a8ab0" stroke="#9ad0e8" stroke-width="1"/>
  <path d="M12 3 L17 11" stroke="#e0e0e0" stroke-width="1"/>
  <circle cx="7" cy="13" r="4.5" fill="#1e1e1e" stroke="#6ab8e0" stroke-width="1.4"/>
  <path d="M7 10.5 V15.5 M4.5 13 H9.5" stroke="#d8d8d8" stroke-width="1.2"/>
  <path d="M10 16 L13 19" stroke="#c87050" stroke-width="1.6"/>
</svg>
<div class="a" style="left:1070px;top:417px;color:#e6e6e6;letter-spacing:-0.35px">Selected Features: 6</div>
<div class="a" style="left:1180px;top:417px;width:1px;height:15px;background:#9a9a9a"></div>
<div class="a" style="left:1189px;top:417px;width:4px;height:14px;background:#a8a8a8"></div>
<div class="a" style="left:1196px;top:417px;width:4px;height:14px;background:#a8a8a8"></div>
<div class="a" style="left:1210px;top:417px;width:1px;height:15px;background:#9a9a9a"></div>
<svg class="a" style="left:1215px;top:415px" width="18" height="18" viewBox="0 0 18 18">
  <path d="M3 8 A6 6 0 0 1 14 5" stroke="#3a9ae0" stroke-width="2.6" fill="none"/>
  <path d="M11 2 L17 2 L16 8 Z" fill="#3a9ae0"/>
  <path d="M15 10 A6 6 0 0 1 4 13" stroke="#3a9ae0" stroke-width="2.6" fill="none"/>
  <path d="M7 16 L1 16 L2 10 Z" fill="#3a9ae0"/>
</svg>
<!-- second tab -->
<svg class="a" style="left:13px;top:446px" width="17" height="15" viewBox="0 0 17 15">
  <rect x="1" y="1" width="15" height="13" fill="#2a2a2a" stroke="#c8c8c8" stroke-width="1.2"/>
  <rect x="1.5" y="1.5" width="14" height="2.5" fill="#6ab0d8"/>
  <path d="M1 6.5 H16 M1 9.5 H16 M5.5 4 V14 M9 4 V14 M12.5 4 V14" stroke="#8a8a8a" stroke-width="1"/>
</svg>
<svg class="a" style="left:101px;top:450px" width="9" height="9" viewBox="0 0 9 9"><path d="M0.5 0.5 L8.5 8.5 M8.5 0.5 L0.5 8.5" stroke="#e0e0e0" stroke-width="1.3"/></svg>
<svg class="a" style="left:1225px;top:453px" width="10" height="6" viewBox="0 0 10 6"><path d="M1 1 L9 1 L5 5 Z" fill="#bdbdbd"/></svg>
<!-- toolbar icons -->
<svg class="a" style="left:53px;top:474px" width="16" height="17" viewBox="0 0 16 17">
  <rect x="0.5" y="0.5" width="15" height="14" fill="#2c2c2c" stroke="#bdbdbd" stroke-width="1"/>
  <rect x="1" y="1" width="14" height="2.5" fill="#6ab0d0"/>
  <path d="M3 6 H6 M8 6 H11 M12.5 6 H14 M3 9 H6 M8 9 H11 M12.5 9 H14 M8 12 H11 M12.5 12 H14" stroke="#a8a8a8" stroke-width="2"/>
  <path d="M4.5 10 V17 M1 13.5 H8" stroke="#e0e0e0" stroke-width="2"/>
</svg>
<svg class="a" style="left:104px;top:474px" width="16" height="17" viewBox="0 0 16 17">
  <rect x="0.5" y="0.5" width="15" height="14" fill="#2c2c2c" stroke="#bdbdbd" stroke-width="1"/>
  <rect x="1" y="1" width="14" height="2.5" fill="#6ab0d0"/>
  <path d="M3 6 H6 M8 6 H11 M12.5 6 H14 M3 9 H6 M8 9 H11 M12.5 9 H14 M3 12 H6 M12.5 12 H14" stroke="#9a9ab8" stroke-width="2"/>
  <path d="M6 13 H11 M6 16 H11" stroke="#d0d0d0" stroke-width="1.5"/>
</svg>
<div class="a" style="left:182px;top:472px;width:1px;height:19px;background:#4a4a4a"></div>
<svg class="a" style="left:252px;top:473px" width="18" height="18" viewBox="0 0 18 18">
  <path d="M1 1 H9 L11 3 V11 H1 Z" fill="#3ab0d0"/>
  <path d="M8 1 V4 H11" fill="none" stroke="#d8e8f0" stroke-width="1"/>
  <rect x="6.5" y="7.5" width="10" height="9.5" fill="#2c2c2c" stroke="#c8c8c8" stroke-width="1"/>
  <path d="M7 10 H16.5 M7 12.5 H16.5 M7 15 H16.5 M10 8 V17 M13.5 8 V17" stroke="#9a9a9a" stroke-width="1"/>
</svg>
<svg class="a" style="left:383px;top:473px" width="18" height="18" viewBox="0 0 18 18">
  <rect x="7.5" y="1.5" width="9" height="3" fill="none" stroke="#d0d0d0" stroke-width="1"/>
  <path d="M10 7 H17 M10 9 H16" stroke="#c0c0c0" stroke-width="1"/>
  <circle cx="6" cy="10" r="4.5" fill="none" stroke="#4ab0d0" stroke-width="1.5"/>
  <path d="M6 8 V12 M4 10 H8" stroke="#d0d0d0" stroke-width="1.2"/>
  <path d="M9.5 13.5 L13 17" stroke="#c87050" stroke-width="1.8"/>
</svg>
<svg class="a" style="left:459px;top:472px" width="18" height="20" viewBox="0 0 18 20">
  <rect x="0.5" y="1.5" width="11" height="6" fill="#2c2c2c" stroke="#8ab0c8" stroke-width="1"/>
  <path d="M1 4.5 H11" stroke="#3ab0d0" stroke-width="2"/>
  <path d="M14 2 V8 L12 6 M14 8 L16 6" stroke="#d0d0d0" stroke-width="1.2" fill="none"/>
  <rect x="6.5" y="11.5" width="11" height="6" fill="#2c2c2c" stroke="#8ab0c8" stroke-width="1"/>
  <path d="M7 14.5 H17" stroke="#3ab0d0" stroke-width="2"/>
  <path d="M3 17 V11 L1 13 M3 11 L5 13" stroke="#d0d0d0" stroke-width="1.2" fill="none"/>
</svg>
<svg class="a" style="left:523px;top:474px" width="16" height="16" viewBox="0 0 16 16">
  <rect x="0.5" y="0.5" width="15" height="15" fill="#8a8a8a" stroke="#a8a8a8" stroke-width="1"/>
  <path d="M1 4 H15 M1 8 H15 M1 12 H15" stroke="#3a3a3a" stroke-width="1.3"/>
</svg>
<svg class="a" style="left:579px;top:474px" width="17" height="18" viewBox="0 0 17 18">
  <rect x="0.5" y="0.5" width="15" height="14" fill="#7a7a7a" stroke="#a8a8a8" stroke-width="1"/>
  <path d="M1 4 H15" stroke="#3a3a3a" stroke-width="1.3"/>
  <rect x="1" y="7" width="14" height="7" fill="#3ab0d0"/>
  <path d="M1 10.5 H15" stroke="#2a6a8a" stroke-width="1"/>
  <path d="M2 12 L7 17 M7 12 L2 17" stroke="#e05a30" stroke-width="1.8"/>
</svg>
<svg class="a" style="left:641px;top:473px" width="18" height="18" viewBox="0 0 18 18">
  <path d="M4.5 4.5 V1.5 H16.5 V12.5 H13" fill="none" stroke="#8ac8e0" stroke-width="1"/>
  <rect x="5" y="2" width="11" height="3" fill="#3ab0d0"/>
  <rect x="0.5" y="6.5" width="13" height="11" fill="#3ab0d0" stroke="#8ac8e0" stroke-width="1"/>
  <path d="M1 10 H13 M1 13.5 H13" stroke="#1f4a5a" stroke-width="1.2"/>
</svg>
<div class="a" style="left:403px;top:475px;color:#dedede">Zoom To</div>
<div class="a" style="left:479px;top:475px;color:#dedede">Switch</div>
<div class="a" style="left:543px;top:475px;color:#dedede">Clear</div>
<div class="a" style="left:599px;top:475px;color:#dedede">Delete</div>
<div class="a" style="left:661px;top:475px;color:#dedede">Copy</div>
<div class="a" style="left:1214px;top:475px;width:14px;height:3px;background:#b0b0b0"></div>
<div class="a" style="left:1214px;top:480px;width:14px;height:3px;background:#b0b0b0"></div>
<div class="a" style="left:1214px;top:485px;width:14px;height:3px;background:#b0b0b0"></div>
<svg class="a" style="left:20px;top:509px" width="13" height="12" viewBox="0 0 13 12"><path d="M12 0 V12 H0 Z" fill="#5a5a5a"/></svg>

</body></html>
